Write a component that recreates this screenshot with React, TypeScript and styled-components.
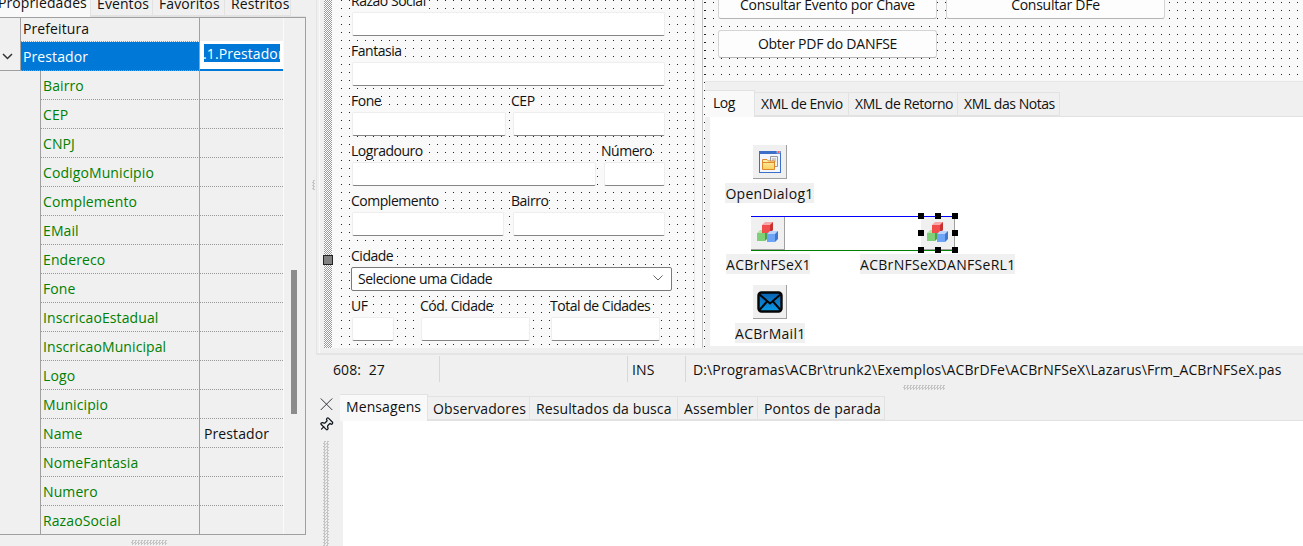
import React from "react";
import styled, { createGlobalStyle } from "styled-components";
import { Pin } from "lucide-react";

const Global = createGlobalStyle`
  html, body { margin: 0; padding: 0; background: #f0f0f0; }
  * { box-sizing: border-box; }
`;

const dots = `conic-gradient(from 270deg at 1px 1px, #222 25%, transparent 0)`;
const checker = `conic-gradient(#9a9a9a 25%, transparent 0 50%, #9a9a9a 0 75%, transparent 0)`;

const Page = styled.div`
  width: 1303px;
  height: 546px;
  overflow: hidden;
  display: flex;
  background: #f0f0f0;
  color: #111;
  font-family: "Open Sans", "Noto Sans", "Liberation Sans", sans-serif;
  font-size: 14px;
  letter-spacing: 0.1px;
`;

/* ---------- tabs ---------- */
const TabBar = styled.div<{ $clip?: number }>`
  display: flex;
  align-items: flex-end;
  height: 28px;
  flex: none;
  margin-top: ${(p) => (p.$clip ? -p.$clip : 0)}px;
  border-bottom: 1px solid #e2e2e2;
`;
const Tab = styled.div<{ $w: number; $active?: boolean; $pl?: number; $pt?: number }>`
  flex: none;
  width: ${(p) => p.$w}px;
  height: ${(p) => (p.$active ? 27 : 24)}px;
  margin-bottom: ${(p) => (p.$active ? -1 : 0)}px;
  padding: ${(p) => p.$pt ?? (p.$active ? 2 : 1)}px 0 0 ${(p) => p.$pl ?? 6}px;
  background: ${(p) => (p.$active ? "#f9f9f9" : "#f0f0f0")};
  border: 1px solid #e2e2e2;
  border-bottom: ${(p) => (p.$active ? "none" : "1px solid #e2e2e2")};
  border-left: none;
  white-space: nowrap;
  overflow: hidden;
  line-height: 20px;
`;

/* ---------- object inspector ---------- */
const Inspector = styled.aside`
  width: 316px;
  flex: none;
  display: flex;
  flex-direction: column;
  position: relative;
`;
const InspectorTabs = styled(TabBar)`
  width: 306px;
`;
const FirstTab = styled(Tab)`
  text-indent: -2px;
`;
const Grid = styled.div`
  width: 306px;
  height: 518px;
  flex: none;
  display: flex;
  border: 1px solid #a0a0a0;
  border-left: none;
  overflow: hidden;
`;
const Rows = styled.div`
  width: 284px;
  flex: none;
  border-right: 1px solid #fafafa;
`;
const Row = styled.div<{ $first?: boolean }>`
  display: flex;
  height: ${(p) => (p.$first ? 24 : 29)}px;
  line-height: ${(p) => (p.$first ? 21 : 30)}px;
`;
const Indent = styled.div<{ $w: number; $solid?: boolean }>`
  flex: none;
  width: ${(p) => p.$w}px;
  border-right: 1px solid #a0a0a0;
  border-bottom: ${(p) => (p.$solid ? "1px solid #a0a0a0" : "none")};
  display: flex;
  align-items: center;
  padding-left: 2px;
`;
const NameCell = styled.div<{ $kind?: "sub" | "selected" }>`
  flex: 1;
  min-width: 0;
  padding-left: 2px;
  color: ${(p) => (p.$kind === "sub" ? "#008000" : p.$kind === "selected" ? "#fff" : "#111")};
  background: ${(p) => (p.$kind === "selected" ? "#0078d7" : "transparent")};
  border-bottom: 1px dotted #999;
  border-right: 1px solid #a0a0a0;
`;
const ValueCell = styled.div`
  flex: none;
  width: 83px;
  padding-left: 4px;
  border-bottom: 1px dotted #999;
`;
const ValueEditor = styled.div`
  flex: none;
  width: 83px;
  height: 30px;
  margin-top: -1px;
  padding: 3px 3px 0 4px;
  background: #fff;
  border-bottom: 2px solid #0078d7;
  overflow: hidden;
`;
const Selected = styled.div`
  background: #0078d7;
  color: #fff;
  height: 18px;
  line-height: 20px;
  overflow: hidden;
  white-space: nowrap;
  text-indent: -1px;
`;
const ScrollTrack = styled.div`
  flex: 1;
  padding: 252px 0 0 7px;
`;
const Thumb = styled.div`
  width: 6px;
  height: 144px;
  background: #8c8c8c;
`;
const Grip = styled.div<{ $w: number; $h: number }>`
  width: ${(p) => p.$w}px;
  height: ${(p) => p.$h}px;
  background-image: ${checker};
  background-size: 3px 3px;
  opacity: 0.5;
`;
const InspectorFoot = styled.div`
  width: 306px;
  padding: 5px 0 0 131px;
`;
const GutterGrip = styled(Grip)`
  position: absolute;
  left: 312px;
  top: 180px;
`;

/* ---------- main ---------- */
const Main = styled.main`
  flex: 1;
  min-width: 0;
  display: flex;
  flex-direction: column;
`;
const Designer = styled.section`
  height: 355px;
  flex: none;
  display: flex;
  border-bottom: 2px solid #e4e4e4;
  border-left: 1px solid #e4e4e4;
`;
const Margin = styled.div`
  width: 3px;
  flex: none;
  border-right: 1px solid #fafafa;
`;
const Spacer = styled.div`
  width: 4px;
  flex: none;
`;
const Hatch = styled.div`
  width: 8px;
  height: 348px;
  flex: none;
  position: relative;
  background-color: #fff;
  background-image: ${checker};
  background-size: 2px 2px;
`;
const HatchHandle = styled.div`
  position: absolute;
  left: -1px;
  top: 255px;
  width: 10px;
  height: 10px;
  background: #808080;
  border: 1px solid #222;
`;
const FormArea = styled.div`
  flex: 1;
  min-width: 0;
  display: flex;
  height: 348px;
  background-color: #f9f9f9;
`;
const FormPanel = styled.div`
  width: 358px;
  flex: none;
  margin-left: 5px;
  padding: 0 0 0 14px;
  overflow: hidden;
  letter-spacing: -0.48px;
  background-color: #f9f9f9;
  background-image: ${dots};
  background-size: 8px 8px;
  background-position: 4px 0;
  border-right: 1px solid #e8e8e8;
`;
const FormBody = styled.div`
  margin-top: -8px;
`;
const FormRow = styled.div<{ $top?: number }>`
  display: flex;
  margin-top: ${(p) => p.$top ?? 6}px;
`;
const Field = styled.div<{ $w: number; $ml?: number }>`
  flex: none;
  width: ${(p) => p.$w}px;
  margin-left: ${(p) => p.$ml ?? 0}px;
`;
const Label = styled.div`
  display: table;
  height: 18px;
  line-height: 18px;
  margin-bottom: 2px;
  background: #f9f9f9;
  white-space: nowrap;
`;
const TextBox = styled.div<{ $inset?: number }>`
  height: 24px;
  margin-left: ${(p) => p.$inset ?? 1}px;
  background: #fff;
  border: 1px solid #eeeeee;
  border-bottom: 1px solid #858585;
  border-radius: 2px;
`;
const Combo = styled.div`
  width: 321px;
  height: 24px;
  display: flex;
  align-items: center;
  justify-content: space-between;
  padding: 0 8px 2px 6px;
  background: #fff;
  border: 1px solid #7a7a7a;
  border-radius: 2px;
`;
const Divider = styled.div`
  width: 10px;
  flex: none;
  background-color: #f9f9f9;
  background-image: ${dots}, linear-gradient(90deg, #f9f9f9 0 7px, #c4c4c4 7px 8px, #f9f9f9 8px);
  background-size: 8px 8px, 100% 100%;
  background-position: 9px 2px, 0 0;
  background-repeat: repeat-y, no-repeat;
`;
const RightSide = styled.div`
  flex: 1;
  min-width: 0;
  display: flex;
  flex-direction: column;
  background: #f0f0f0;
`;
const ActionsPanel = styled.div`
  height: 82px;
  flex: none;
  overflow: hidden;
  padding-left: 13px;
  letter-spacing: -0.25px;
  background-color: #f9f9f9;
  background-image: ${dots};
  background-size: 8px 8px;
  background-position: 0 2px;
  border-bottom: 1px solid #e6e6e6;
`;
const ActionRow = styled.div<{ $top?: number }>`
  display: flex;
  gap: 9px;
  margin-top: ${(p) => p.$top ?? 11}px;
`;
const ActionButton = styled.button`
  width: 219px;
  height: 28px;
  padding: 0 0 2px;
  font: inherit;
  letter-spacing: inherit;
  color: #111;
  background: #fdfdfd;
  border: 1px solid #d4d4d4;
  border-bottom-color: #b4b4b4;
  border-radius: 3px;
`;
const LogPage = styled.div`
  flex: 1;
  min-height: 0;
  padding-top: 7px;
  display: flex;
  flex-direction: column;
`;
const LogTabs = styled(TabBar)`
  letter-spacing: -0.45px;
`;
const CanvasWrap = styled.div`
  height: 229px;
  flex: none;
  padding-left: 5px;
`;
const Canvas = styled.div`
  position: relative;
  height: 100%;
  background: #fff;
`;
const IconBox = styled.div<{ $x: number; $y: number }>`
  position: absolute;
  left: ${(p) => p.$x}px;
  top: ${(p) => p.$y}px;
  width: 34px;
  height: 34px;
  display: flex;
  align-items: center;
  justify-content: center;
  background: #f0f0f0;
  border-right: 1px solid #a0a0a0;
  border-bottom: 1px solid #a0a0a0;
`;
const NodeLabel = styled.div<{ $x: number; $y: number; $w: number }>`
  position: absolute;
  left: ${(p) => p.$x}px;
  top: ${(p) => p.$y}px;
  width: ${(p) => p.$w}px;
  height: 20px;
  line-height: 22px;
  text-align: center;
  letter-spacing: 0.3px;
  background: #f0f0f0;
  white-space: nowrap;
`;
const Link = styled.div<{ $y: number; $color: string }>`
  position: absolute;
  left: 41px;
  top: ${(p) => p.$y}px;
  width: 204px;
  height: 1px;
  background: ${(p) => p.$color};
`;
const Handle = styled.div<{ $x: number; $y: number }>`
  position: absolute;
  left: ${(p) => p.$x - 3}px;
  top: ${(p) => p.$y - 3}px;
  width: 6px;
  height: 6px;
  background: #000;
`;

/* ---------- status + messages ---------- */
const StatusBar = styled.div`
  height: 28px;
  flex: none;
  display: flex;
  align-items: center;
  line-height: 28px;
  letter-spacing: 0.12px;
`;
const StatusCell = styled.div<{ $w?: number; $pl: number }>`
  height: 26px;
  flex: ${(p) => (p.$w ? "none" : "1")};
  width: ${(p) => (p.$w ? `${p.$w}px` : "auto")};
  padding-left: ${(p) => p.$pl}px;
  border-right: ${(p) => (p.$w ? "1px solid #d8d8d8" : "none")};
  white-space: pre;
`;
const SplitRow = styled.div`
  height: 10px;
  flex: none;
  padding: 2px 0 0 587px;
`;
const Messages = styled.div`
  flex: 1;
  min-height: 0;
  display: flex;
`;
const ToolStrip = styled.div`
  width: 24px;
  flex: none;
  display: flex;
  flex-direction: column;
  align-items: center;
  gap: 7px;
  padding: 5px 4px 0 0;
`;
const StripGrip = styled(Grip)`
  margin-top: 1px;
`;
const MsgPane = styled.div`
  flex: 1;
  min-width: 0;
  display: flex;
  flex-direction: column;
`;
const MsgBody = styled.div`
  flex: 1;
  margin-left: 3px;
  background: #fff;
`;
const PinIcon = styled(Pin)`
  transform: rotate(45deg);
  color: #101820;
`;
const Chevron = styled.svg`
  display: block;
`;

/* ---------- drawings ---------- */
const CloseIcon = () => (
  <svg width="13" height="13" viewBox="0 0 13 13">
    <path d="M0.5 0.5 L12.5 12.5 M12.5 0.5 L0.5 12.5" stroke="#2a2a3a" strokeWidth="1" fill="none" />
  </svg>
);
const DialogIcon = () => (
  <svg width="24" height="24" viewBox="0 0 24 24">
    <defs>
      <linearGradient id="fold" x1="0" y1="0" x2="0" y2="1">
        <stop offset="0" stopColor="#fff2b8" />
        <stop offset="1" stopColor="#f8cf5c" />
      </linearGradient>
    </defs>
    <rect x="1.5" y="1.5" width="21" height="21" fill="#f4f6ff" stroke="#3c6fc8" />
    <rect x="1" y="1" width="22" height="3" fill="#3c6fc8" />
    <rect x="19" y="1" width="3" height="2" fill="#e33" stroke="#fff" strokeWidth="0.5" />
    <path d="M12.5 6.5 H19.5 V16.5 H12.5 Z" fill="#f2f2f2" stroke="#999" />
    <path d="M14 9 H18 M14 11 H18" stroke="#aaa" />
    <path d="M4.5 9.5 H9 L10.5 11 H16.5 V19.5 H4.5 Z" fill="url(#fold)" stroke="#dd8a2b" />
    <path d="M5 12.5 H16" stroke="#dd8a2b" />
  </svg>
);
const Cube = ({ x, y, top, face, side }: { x: number; y: number; top: string; face: string; side: string }) => (
  <g transform={`translate(${x} ${y})`}>
    <path d="M0 3 L3 0 H11 L11 3 Z" fill={top} />
    <path d="M0 3 H8 V11 H0 Z" fill={face} />
    <path d="M8 3 L11 0 V8 L8 11 Z" fill={side} />
  </g>
);
const CubesIcon = () => (
  <svg width="22" height="21" viewBox="0 0 22 21">
    <Cube x={0} y={8} top="#b4e4a8" face="#7fcf78" side="#4f9f50" />
    <Cube x={5} y={0} top="#f8a8a8" face="#f24d4d" side="#c93030" />
    <Cube x={10} y={9} top="#b8d4ff" face="#6ea4f5" side="#3f78d0" />
  </svg>
);
const MailIcon = () => (
  <svg width="26" height="22" viewBox="0 0 26 22">
    <defs>
      <linearGradient id="mail" x1="0" y1="0" x2="0" y2="1">
        <stop offset="0" stopColor="#0a5fb0" />
        <stop offset="1" stopColor="#0a9be8" />
      </linearGradient>
    </defs>
    <rect x="1.5" y="1.5" width="23" height="19" rx="3" fill="url(#mail)" stroke="#050505" strokeWidth="2.4" />
    <path d="M2 3 L13 12.5 L24 3 M2 19.5 L10 10.5 M24 19.5 L16 10.5" fill="none" stroke="#050505" strokeWidth="2" />
  </svg>
);

/* ---------- data ---------- */
const subProps: [string, string?][] = [
  ["Bairro"], ["CEP"], ["CNPJ"], ["CodigoMunicipio"], ["Complemento"], ["EMail"], ["Endereco"], ["Fone"],
  ["InscricaoEstadual"], ["InscricaoMunicipal"], ["Logo"], ["Municipio"], ["Name", "Prestador"],
  ["NomeFantasia"], ["Numero"], ["RazaoSocial"],
];
const handles: [number, number][] = [
  [211, 99], [228, 99], [245, 99], [211, 116], [245, 116], [211, 133], [228, 133], [245, 133],
];

export default function App() {
  return (
    <Page>
      <Global />
      <Inspector>
        <InspectorTabs $clip={11}>
          <FirstTab $w={91} $active $pl={0}>Propriedades</FirstTab>
          <Tab $w={62}>Eventos</Tab>
          <Tab $w={72}>Favoritos</Tab>
          <Tab $w={66}>Restritos</Tab>
        </InspectorTabs>
        <Grid>
          <Rows>
            <Row $first>
              <Indent $w={21} />
              <NameCell>Prefeitura</NameCell>
              <ValueCell />
            </Row>
            <Row>
              <Indent $w={21} $solid>
                <Chevron width="11" height="7" viewBox="0 0 11 7">
                  <path d="M1 1 L5.5 5.5 L10 1" fill="none" stroke="#333" strokeWidth="1.5" />
                </Chevron>
              </Indent>
              <NameCell $kind="selected">Prestador</NameCell>
              <ValueEditor>
                <Selected>.1.Prestador</Selected>
              </ValueEditor>
            </Row>
            {subProps.map(([name, value]) => (
              <Row key={name}>
                <Indent $w={41} />
                <NameCell $kind="sub">{name}</NameCell>
                <ValueCell>{value}</ValueCell>
              </Row>
            ))}
          </Rows>
          <ScrollTrack>
            <Thumb />
          </ScrollTrack>
        </Grid>
        <InspectorFoot>
          <Grip $w={36} $h={5} />
        </InspectorFoot>
        <GutterGrip $w={3} $h={10} />
      </Inspector>

      <Main>
        <Designer>
          <Margin />
          <Spacer />
          <Hatch>
            <HatchHandle />
          </Hatch>
          <FormArea>
            <FormPanel>
              <FormBody>
                <FormRow $top={0}>
                  <Field $w={314}><Label>Razão Social</Label><TextBox /></Field>
                </FormRow>
                <FormRow>
                  <Field $w={314}><Label>Fantasia</Label><TextBox /></Field>
                </FormRow>
                <FormRow>
                  <Field $w={155}><Label>Fone</Label><TextBox /></Field>
                  <Field $w={154} $ml={5}><Label>CEP</Label><TextBox $inset={2} /></Field>
                </FormRow>
                <FormRow>
                  <Field $w={245}><Label>Logradouro</Label><TextBox /></Field>
                  <Field $w={64} $ml={5}><Label>Número</Label><TextBox $inset={3} /></Field>
                </FormRow>
                <FormRow>
                  <Field $w={153}><Label>Complemento</Label><TextBox /></Field>
                  <Field $w={154} $ml={7}><Label>Bairro</Label><TextBox $inset={2} /></Field>
                </FormRow>
                <FormRow $top={11}>
                  <Field $w={321}>
                    <Label>Cidade</Label>
                    <Combo>
                      Selecione uma Cidade
                      <svg width="10" height="6" viewBox="0 0 10 6">
                        <path d="M0.5 0.5 L5 5 L9.5 0.5" fill="none" stroke="#666" />
                      </svg>
                    </Combo>
                  </Field>
                </FormRow>
                <FormRow>
                  <Field $w={43}><Label>UF</Label><TextBox /></Field>
                  <Field $w={110} $ml={26}><Label>Cód. Cidade</Label><TextBox /></Field>
                  <Field $w={110} $ml={20}><Label>Total de Cidades</Label><TextBox /></Field>
                </FormRow>
              </FormBody>
            </FormPanel>
            <Divider />
            <RightSide>
              <ActionsPanel>
                <ActionRow $top={-9}>
                  <ActionButton>Consultar Evento por Chave</ActionButton>
                  <ActionButton>Consultar DFe</ActionButton>
                </ActionRow>
                <ActionRow>
                  <ActionButton>Obter PDF do DANFSE</ActionButton>
                </ActionRow>
              </ActionsPanel>
              <LogPage>
                <LogTabs>
                  <Tab $w={50} $active $pl={8}>Log</Tab>
                  <Tab $w={94}>XML de Envio</Tab>
                  <Tab $w={109}>XML de Retorno</Tab>
                  <Tab $w={102}>XML das Notas</Tab>
                </LogTabs>
                <CanvasWrap>
                  <Canvas>
                    <IconBox $x={43} $y={28}><DialogIcon /></IconBox>
                    <NodeLabel $x={15} $y={66} $w={89}>OpenDialog1</NodeLabel>
                    <IconBox $x={41} $y={99}><CubesIcon /></IconBox>
                    <NodeLabel $x={16} $y={137} $w={84}>ACBrNFSeX1</NodeLabel>
                    <IconBox $x={211} $y={99}><CubesIcon /></IconBox>
                    <NodeLabel $x={150} $y={137} $w={155}>ACBrNFSeXDANFSeRL1</NodeLabel>
                    <Link $y={99} $color="#0000ff" />
                    <Link $y={133} $color="#008000" />
                    {handles.map(([x, y]) => (
                      <Handle key={`${x}-${y}`} $x={x} $y={y} />
                    ))}
                    <IconBox $x={43} $y={168}><MailIcon /></IconBox>
                    <NodeLabel $x={25} $y={206} $w={70}>ACBrMail1</NodeLabel>
                  </Canvas>
                </CanvasWrap>
              </LogPage>
            </RightSide>
          </FormArea>
        </Designer>

        <StatusBar>
          <StatusCell $w={124} $pl={17}>{"608:  27"}</StatusCell>
          <StatusCell $w={188} $pl={0} />
          <StatusCell $w={58} $pl={4}>INS</StatusCell>
          <StatusCell $pl={7}>D:\Programas\ACBr\trunk2\Exemplos\ACBrDFe\ACBrNFSeX\Lazarus\Frm_ACBrNFSeX.pas</StatusCell>
        </StatusBar>
        <SplitRow>
          <Grip $w={42} $h={5} />
        </SplitRow>

        <Messages>
          <ToolStrip>
            <CloseIcon />
            <PinIcon size={16} strokeWidth={2} />
            <StripGrip $w={6} $h={110} />
          </ToolStrip>
          <MsgPane>
            <TabBar>
              <Tab $w={88} $active>Mensagens</Tab>
              <Tab $w={102} $pt={2} $pl={5}>Observadores</Tab>
              <Tab $w={148} $pt={2}>Resultados da busca</Tab>
              <Tab $w={80} $pt={2}>Assembler</Tab>
              <Tab $w={127} $pt={2}>Pontos de parada</Tab>
            </TabBar>
            <MsgBody />
          </MsgPane>
        </Messages>
      </Main>
    </Page>
  );
}
